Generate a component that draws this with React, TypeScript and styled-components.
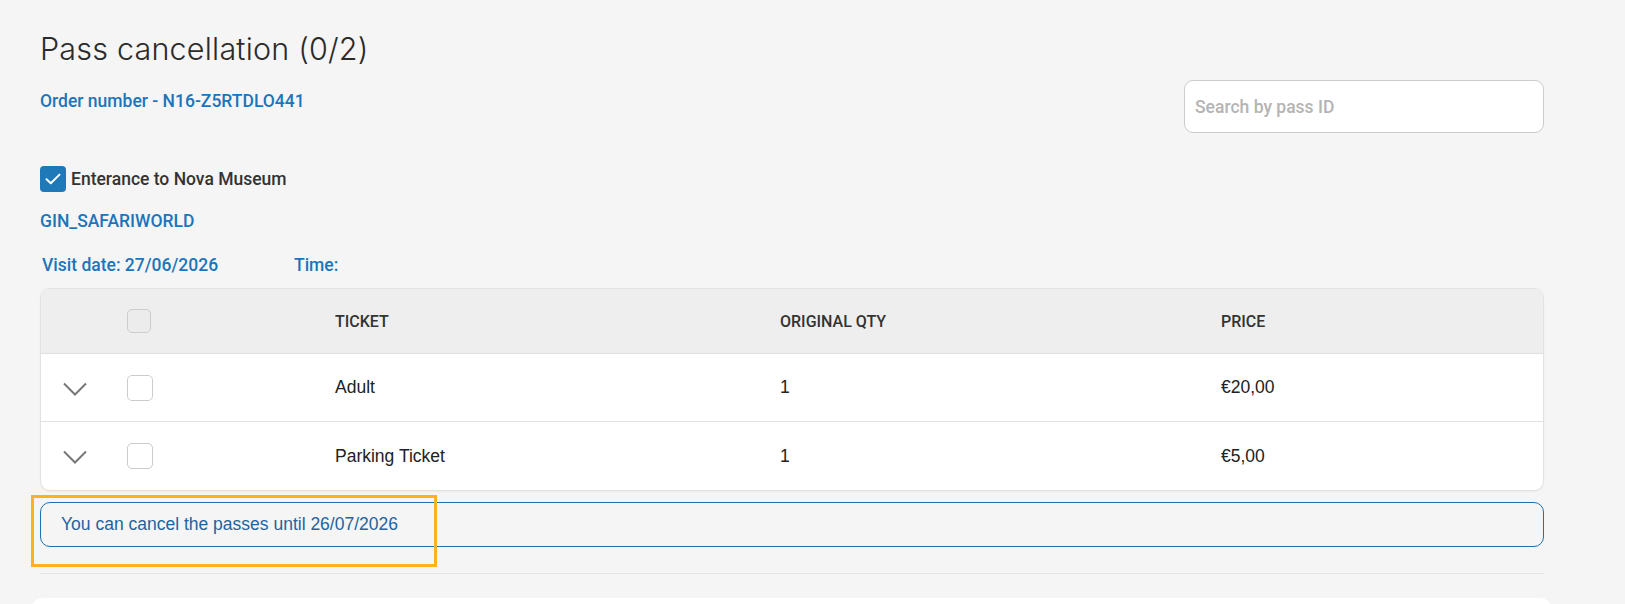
import styled, { createGlobalStyle } from "styled-components";

const GlobalStyle = createGlobalStyle`
  html, body {
    margin: 0;
    padding: 0;
    background: #f5f5f5;
    font-family: Roboto, "Liberation Sans", sans-serif;
  }
  * {
    box-sizing: border-box;
  }
`;

const Page = styled.div`
  padding: 31px 81px 0 40px;
  height: 604px;
  overflow: hidden;
`;

const TopRow = styled.div`
  display: flex;
  justify-content: space-between;
  align-items: flex-start;
`;

const Title = styled.h1`
  margin: 0;
  font-family: Inter, "Open Sans", sans-serif;
  font-weight: 300;
  font-size: 30.5px;
  letter-spacing: 0.2px;
  line-height: 36px;
  color: #2b2b2b;
`;

const BlueLabel = styled.div<{ $offset?: number }>`
  font-family: Roboto, sans-serif;
  font-weight: 500;
  font-size: 17.5px;
  line-height: 20px;
  color: #1b75bc;
  margin-left: ${(p) => p.$offset ?? 0}px;
`;

const OrderNumber = styled(BlueLabel)`
  margin-top: 24px;
`;

const SearchInput = styled.input`
  margin-top: 49px;
  width: 360px;
  height: 53px;
  padding: 0 10px;
  border: 1px solid #cccccc;
  border-radius: 9px;
  background: #ffffff;
  font-family: Roboto, sans-serif;
  font-weight: 500;
  font-size: 17.5px;
  outline: none;

  &::placeholder {
    color: #b4b4b4;
  }
`;

const ProductRow = styled.label`
  display: flex;
  align-items: center;
  gap: 5px;
  margin-top: 33px;
  font-family: Roboto, sans-serif;
  font-weight: 500;
  font-size: 17.5px;
  color: #333333;
`;

const CheckedBox = styled.span`
  width: 26px;
  height: 26px;
  border-radius: 4px;
  background: #1f78b8;
  display: flex;
  align-items: center;
  justify-content: center;
`;

const ProductCode = styled(BlueLabel)`
  margin-top: 19px;
`;

const VisitRow = styled.div`
  display: flex;
  margin-top: 24px;
  margin-left: 2px;
`;

const VisitItem = styled(BlueLabel)<{ $width?: number }>`
  width: ${(p) => (p.$width ? `${p.$width}px` : "auto")};
`;

const Table = styled.div`
  margin-top: 13px;
  border: 1px solid #e2e2e2;
  border-radius: 10px;
  overflow: hidden;
  background: #ffffff;
  box-shadow: 0 1px 2px rgba(0, 0, 0, 0.04);
`;

const GridRow = styled.div`
  display: grid;
  grid-template-columns: 64px 208px 445px 441px 1fr;
  align-items: center;
  padding-left: 22px;
`;

const HeaderRow = styled(GridRow)`
  height: 65px;
  background: #eeeeee;
  border-bottom: 1px solid #e0e0e0;
  font-family: Roboto, sans-serif;
  font-weight: 500;
  font-size: 16px;
  color: #333333;
  text-transform: uppercase;
`;

const BodyRow = styled(GridRow)`
  height: 68px;
  font-family: "Liberation Sans", Arial, sans-serif;
  font-size: 17.5px;
  color: #222222;

  &:not(:last-child) {
    border-bottom: 1px solid #e0e0e0;
  }
`;

const Box = styled.span<{ $size: number; $bg: string }>`
  display: block;
  width: ${(p) => p.$size}px;
  height: ${(p) => p.$size}px;
  border: 1px solid #cccccc;
  border-radius: 5px;
  background: ${(p) => p.$bg};
`;

const Chevron = styled.svg`
  display: block;
  margin-top: 2px;
`;

const InfoWrap = styled.div`
  position: relative;
  margin-top: 11px;
`;

const InfoBox = styled.div`
  height: 45px;
  border: 1px solid #1f70b0;
  border-radius: 10px;
  padding-left: 20px;
  display: flex;
  align-items: center;
  font-family: "Liberation Sans", Arial, sans-serif;
  font-size: 17.5px;
  color: #1f63a0;
`;

const Highlight = styled.div`
  position: absolute;
  top: -7px;
  left: -9px;
  width: 406px;
  height: 72px;
  border: 3px solid #ffb11f;
  pointer-events: none;
`;

const Divider = styled.hr`
  margin: 26px 0 0;
  border: none;
  border-top: 1px solid #e6e6e6;
`;

const NextCard = styled.div`
  margin: 24px -7px 0 -8px;
  height: 40px;
  background: #ffffff;
  border-radius: 10px;
`;

const tickets = [
  { name: "Adult", qty: 1, price: "€20,00" },
  { name: "Parking Ticket", qty: 1, price: "€5,00" },
];

export default function App() {
  return (
    <>
      <GlobalStyle />
      <Page>
        <TopRow>
          <div>
            <Title>Pass cancellation (0/2)</Title>
            <OrderNumber>Order number - N16-Z5RTDLO441</OrderNumber>
          </div>
          <SearchInput placeholder="Search by pass ID" />
        </TopRow>

        <ProductRow>
          <CheckedBox>
            <svg width="16" height="12" viewBox="0 0 16 12" fill="none">
              <path d="M1.5 6.2 5.8 10.3 14.5 1.6" stroke="#fff" strokeWidth="2" strokeLinecap="round" strokeLinejoin="round" />
            </svg>
          </CheckedBox>
          Enterance to Nova Museum
        </ProductRow>

        <ProductCode>GIN_SAFARIWORLD</ProductCode>

        <VisitRow>
          <VisitItem $width={252}>Visit date: 27/06/2026</VisitItem>
          <VisitItem>Time:</VisitItem>
        </VisitRow>

        <Table>
          <HeaderRow>
            <span />
            <Box $size={24} $bg="#ececec" />
            <span>Ticket</span>
            <span>Original qty</span>
            <span>Price</span>
          </HeaderRow>
          {tickets.map((t) => (
            <BodyRow key={t.name}>
              <Chevron width="24" height="14" viewBox="0 0 24 14" fill="none">
                <path d="M1 1.5 12 12.5 23 1.5" stroke="#777" strokeWidth="2" />
              </Chevron>
              <Box $size={26} $bg="#ffffff" />
              <span>{t.name}</span>
              <span>{t.qty}</span>
              <span>{t.price}</span>
            </BodyRow>
          ))}
        </Table>

        <InfoWrap>
          <InfoBox>You can cancel the passes until 26/07/2026</InfoBox>
          <Highlight />
        </InfoWrap>

        <Divider />
        <NextCard />
      </Page>
    </>
  );
}
